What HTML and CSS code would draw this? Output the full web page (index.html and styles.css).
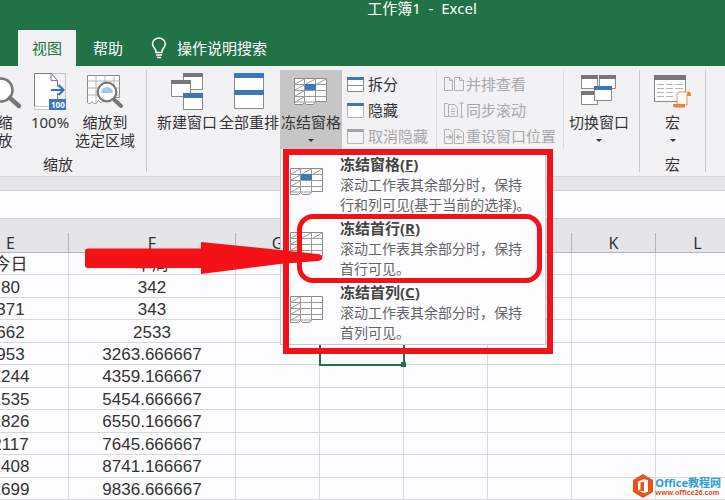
FILE: index.html
```html
<!doctype html>
<html lang="zh-CN">
<head>
    <meta charset="utf-8">
    <meta name="viewport" content="width=device-width, initial-scale=1">
    <title>工作簿1 - Excel</title>
    <link rel="stylesheet" href="styles.css">
</head>
<body>
    <header class="titlebar">工作簿1  -  Excel</header>
    <nav class="tabs">
        <button class="tab active">视图</button>
        <button class="tab">帮助</button>
        <button class="tab tell-me">
            <svg width="16" height="22" viewBox="0 0 16 22" fill="none" stroke="#fff" stroke-width="1.5">
                <path d="M5 15.500V14C5 12 1.500 10.500 1.500 7a6.300 6 0 0 1 12.800 0C14.300 10.500 11 12 11 14v1.500zM5 18h6M6 20.500h4"/>
            </svg>
            操作说明搜索
        </button>
    </nav>

    <!-- Ribbon -->
    <div class="ribbon">
        <section class="group zoom-group">
            <div class="tools">
                <button class="big zoom-btn">
                    <svg class="icon" width="42" height="37" viewBox="0 0 42 37" fill="none">
                        <circle cx="17" cy="17" r="11.500" fill="#fff" stroke="#777" stroke-width="2.500"/>
                        <path d="M26 25l9 8" stroke="#777" stroke-width="4.500" stroke-linecap="round"/>
                    </svg>
                    <span>缩<br>放</span>
                </button>
                <button class="big hundred-btn">
                    <svg class="icon" width="32" height="37" viewBox="0 0 32 37" fill="none">
                        <path d="M.5.5h18l5 6v29H.5z" fill="#fff"/>
                        <path d="M.5 36V.5h31V26M.5 33.500h14M.5 36.500h14" stroke="#c4c4c4"/>
                        <path d="M.5 33V.5h17l6 7V14M17 .5v7h7M23.500 20v6" stroke="#7d7d7d"/>
                        <path d="M17 17h11M24.500 12l5 5-5 5" stroke="#2f74c0" stroke-width="2.200"/>
                        <path d="M15 26h17v11H15z" fill="#3a78b8"/>
                        <text x="17" y="35" class="badge-text">100</text>
                    </svg>
                    <span>100%</span>
                </button>
                <button class="big selection-btn">
                    <svg class="icon" width="36" height="37" viewBox="0 0 36 37" fill="none">
                        <path d="M.5 2.500h32v22h-15c-2 6-4 6-6 3-2 4-5 4-6 1-2 3-4 2-5 1z" fill="#fff" stroke="#8a8a8a"/>
                        <path d="M.5 8h32M.5 15h32M.5 22h32M9 2.500v27M18 2.500V9M27 2.500v22" stroke="#b5b5b5"/>
                        <circle cx="20" cy="19" r="9.300" fill="#fff" stroke="#777" stroke-width="2.200"/>
                        <path d="M14 20c0-8 12-8 12 0z" fill="#a9c8e6"/>
                        <path d="M27.500 27l6.500 6" stroke="#777" stroke-width="4" stroke-linecap="round"/>
                    </svg>
                    <span>缩放到<br>选定区域</span>
                </button>
            </div>
            <div class="group-name">缩放</div>
        </section>

        <section class="group window-group">
            <div class="tools">
                <button class="big">
                    <svg class="icon" width="32" height="37" viewBox="0 0 32 37" fill="#fff" stroke="#8a8a8a">
                        <path d="M12.500.5h19v16h-19z"/><path d="M12 0h20v4H12z" fill="#777" stroke="none"/>
                        <path d="M.5 7.500h19v16H.5z"/><path d="M0 7h20v4H0z" fill="#777" stroke="none"/>
                        <path d="M12.500 20.500h19v16h-19z"/><path d="M12 20h20v5H12z" fill="#3a78b8" stroke="none"/>
                    </svg>
                    <span>新建窗口</span>
                </button>
                <button class="big">
                    <svg class="icon" width="30" height="37" viewBox="0 0 30 37" fill="#fff" stroke="#8a8a8a">
                        <path d="M.5.5h29v35H.5z"/>
                        <path d="M0 0h30v5H0zM0 17h30v5H0z" fill="#3a78b8" stroke="none"/>
                    </svg>
                    <span>全部重排</span>
                </button>
                <div class="freeze">
                    <button class="big open">
                        <svg class="icon" width="34" height="29" viewBox="0 0 34 29">
                            <use href="#grid"/><use href="#pane"/>
                        </svg>
                        <span>冻结窗格</span>
                        <i class="caret"></i>
                    </button>
                    <div class="menu">
                        <button class="item">
                            <svg width="34" height="29" viewBox="0 0 34 29"><use href="#grid"/><use href="#pane"/></svg>
                            <span class="item-text"><b>冻结窗格(<u>F</u>)</b>滚动工作表其余部分时，保持<br>行和列可见(基于当前的选择)。</span>
                        </button>
                        <button class="item">
                            <svg width="34" height="29" viewBox="0 0 34 29"><use href="#grid"/></svg>
                            <span class="item-text"><b>冻结首行(<u>R</u>)</b>滚动工作表其余部分时，保持<br>首行可见。</span>
                        </button>
                        <button class="item">
                            <svg width="34" height="29" viewBox="0 0 34 29"><use href="#grid-column"/></svg>
                            <span class="item-text"><b>冻结首列(<u>C</u>)</b>滚动工作表其余部分时，保持<br>首列可见。</span>
                        </button>
                        <div class="mark-frame"></div>
                        <div class="mark-ring"></div>
                        <svg class="mark-arrow" width="238" height="32" viewBox="0 0 238 32" fill="#f41118">
                            <path d="M3 6.500h113V0l79 8 38 4c6 1 6 6 0 7l-38 3-79 10v-6H3q-3 0-3-3V9.500q0-3 3-3z"/>
                        </svg>
                    </div>
                </div>
                <div class="small-list">
                    <button class="small">
                        <svg width="17" height="15" viewBox="0 0 17 15"><path d="M.5.5h16v14H.5zM1 8.500h15" fill="#fff" stroke="#8a8a8a"/><path d="M0 0h17v3H0z" fill="#3a78b8"/></svg>
                        拆分
                    </button>
                    <button class="small">
                        <svg width="17" height="15" viewBox="0 0 17 15"><path d="M.5.5h16v14H.5z" fill="#fff" stroke="#b5b5b5"/><path d="M0 0h17v3H0z" fill="#3a78b8"/></svg>
                        隐藏
                    </button>
                    <button class="small" disabled>
                        <svg width="17" height="15" viewBox="0 0 17 15"><path d="M.5.5h16v14H.5z" fill="#f4f3f5" stroke="#b5b5b5"/><path d="M0 0h17v3H0z" fill="#a5a5a5"/></svg>
                        取消隐藏
                    </button>
                </div>
                <div class="small-list compare">
                    <button class="small" disabled>
                        <svg width="20" height="14" viewBox="0 0 20 14" fill="none" stroke="#b0b0b0"><path d="M.5.5h5l3 3v10h-8zM5.500.5v3h3M10.500.5h5l4 3v10h-9zM15.500.5v3h4"/></svg>
                        并排查看
                    </button>
                    <button class="small" disabled>
                        <svg width="20" height="18" viewBox="0 0 20 18" fill="none" stroke="#b0b0b0"><path d="M4 2.500H.5v13H4M4.500 3.500h6l3 3v9h-9zM7 8h4M7 10.500h4M7 13h4M17.500 1v16M15.500 3l2-2 2 2M15.500 15l2 2 2-2"/></svg>
                        同步滚动
                    </button>
                    <button class="small" disabled>
                        <svg width="20" height="15" viewBox="0 0 20 15" fill="none" stroke="#b0b0b0"><path d="M.5.500h5l3 3v11h-8zM10.500.5h5l4 3v11h-9z"/><path d="M2 8h5M5 5.500L7.500 8 5 10.500M18 8h-5M15 5.500L12.500 8l2.500 2.500" stroke="#8f8f8f"/></svg>
                        重设窗口位置
                    </button>
                </div>
                <button class="big switch-btn">
                    <svg class="icon" width="36" height="37" viewBox="0 0 36 37" fill="#fff" stroke="#8a8a8a">
                        <path d="M.5 2.500h16v13H.5zM18.500 2.500h16v13h-16zM.5 18.500h16v13H.5z"/>
                        <path d="M0 2h17v4H0zM18 2h17v4H18zM0 18h17v4H0z" fill="#777" stroke="none"/>
                        <path d="M13.500 13.500h17v14h-17z"/><path d="M13 13h18v4H13z" fill="#3a78b8" stroke="none"/>
                    </svg>
                    <span>切换窗口</span>
                    <i class="caret"></i>
                </button>
            </div>
        </section>

        <section class="group macro-group">
            <div class="tools">
                <button class="big">
                    <svg class="icon" width="38" height="37" viewBox="0 0 38 37" fill="none">
                        <path d="M.5 2.500h31v26H.5z" fill="#fff" stroke="#8a8a8a"/>
                        <path d="M0 2h32v5H0z" fill="#777"/>
                        <path d="M3 11.500h7m2 0h7m2 0h8M3 15.500h7m2 0h7m2 0h8M3 19.500h7m2 0h7M3 23.500h7m2 0h7" stroke="#b5b5b5"/>
                        <path d="M23 32V21q0-2 2-2h10q-2 1-2 4v9z" fill="#fff" stroke="#e8915a"/>
                        <path d="M34 19q3-1 3 4h-4q0-3 1-4zM19 31h12v3.500H21q-2 0-2-3.500z" fill="#f07f2e"/>
                    </svg>
                    <span>宏</span>
                    <i class="caret"></i>
                </button>
            </div>
            <div class="group-name">宏</div>
        </section>
    </div>

    <div class="formula"><input type="text" aria-label="编辑栏"></div>

    <!-- Worksheet -->
    <main class="sheet">
        <table>
            <colgroup><col class="col-e"><col class="col-f"><col><col><col><col><col><col></colgroup>
            <thead>
                <tr><th>E</th><th>F</th><th>G</th><th>H</th><th>I</th><th>J</th><th>K</th><th>L</th></tr>
            </thead>
            <tbody>
                <tr><td>今日</td><td>本周</td><td></td><td></td><td></td><td></td><td></td><td></td></tr>
                <tr><td>80</td><td>342</td><td></td><td></td><td></td><td></td><td></td><td></td></tr>
                <tr><td>371</td><td>343</td><td></td><td></td><td></td><td></td><td></td><td></td></tr>
                <tr><td>662</td><td>2533</td><td></td><td></td><td></td><td></td><td></td><td></td></tr>
                <tr><td>953</td><td>3263.666667</td><td></td><td class="selected"></td><td></td><td></td><td></td><td></td></tr>
                <tr><td>1244</td><td>4359.166667</td><td></td><td></td><td></td><td></td><td></td><td></td></tr>
                <tr><td>1535</td><td>5454.666667</td><td></td><td></td><td></td><td></td><td></td><td></td></tr>
                <tr><td>1826</td><td>6550.166667</td><td></td><td></td><td></td><td></td><td></td><td></td></tr>
                <tr><td>2117</td><td>7645.666667</td><td></td><td></td><td></td><td></td><td></td><td></td></tr>
                <tr><td>2408</td><td>8741.166667</td><td></td><td></td><td></td><td></td><td></td><td></td></tr>
                <tr><td>2699</td><td>9836.666667</td><td></td><td></td><td></td><td></td><td></td><td></td></tr>
            </tbody>
        </table>
    </main>

    <div class="watermark">
        <svg width="20" height="24" viewBox="0 0 20 24">
            <path d="M10 0l10 6v12l-10 6-10-6V6z" fill="#e8541c"/>
            <path d="M5 7.500l6-2.500 4 1.200v11.600L11 19l-6-2.500 6 .7V7.500L7.500 8.300v7L5 16.500z" fill="#fff"/>
        </svg>
        <div>
            <div class="site">Office教程网</div>
            <div class="url">www.office26.com</div>
        </div>
    </div>

    <!-- Shared shapes for the freeze icons -->
    <svg class="defs" width="0" height="0">
        <symbol id="grid" viewBox="0 0 34 29">
            <path d="M.5 1.500h32v23h-11l-2 3h-7l-2-2-2 2h-8z" fill="#fff" stroke="#8a8a8a"/>
            <path d="M.5 7.500h32M.5 13.500h32M.5 19.500h32M.5 25h20M10.500 1.500v24M21.500 1.500v24" fill="none" stroke="#9a9a9a"/>
            <path d="M1 7l9-5M12 7l9-5M23 7l9-5M1 13l9-5M1 19l9-5M1 25l9-5" fill="none" stroke="#9a9a9a"/>
        </symbol>
        <symbol id="grid-column" viewBox="0 0 34 29">
            <path d="M.5 1.500h32v23h-11l-2 3h-7l-2-2-2 2h-8z" fill="#fff" stroke="#8a8a8a"/>
            <path d="M.5 7.500h32M.5 13.500h32M.5 19.500h32M.5 25h20M10.500 1.500v24M21.500 1.500v24" fill="none" stroke="#9a9a9a"/>
            <path d="M1 7l9-5M1 13l9-5M1 19l9-5M1 25l9-5" fill="none" stroke="#9a9a9a"/>
        </symbol>
        <symbol id="pane" viewBox="0 0 34 29"><path d="M11 7h11v6H11z" fill="#3a78b8"/></symbol>
    </svg>
</body>
</html>
```
FILE: styles.css
```css
* {
    box-sizing: border-box;
}

html, body {
    height: 100%;
}

body {
    position: relative;
    display: flex;
    flex-direction: column;
    margin: 0;
    overflow: hidden;
    background: #fdfcfe;
    color: #333;
    font-family: "Noto Sans", "Noto Sans CJK SC", sans-serif;
    font-size: 15px;
    line-height: 18px;
}

button {
    padding: 0;
    border: none;
    background: none;
    color: inherit;
    font: inherit;
    white-space: nowrap;
}

svg {
    flex: none;
    display: block;
}

.titlebar {
    padding: 0 0 14px 119px;
    background: #217346;
    color: #fff;
    line-height: 16px;
    text-align: center;
    white-space: pre;
}

.tabs {
    display: flex;
    height: 36px;
    padding-left: 18px;
    background: #217346;
}

.tab {
    padding: 0 17px;
    color: #fff;
}

.tab.active {
    padding: 0 14px;
    background: #f2f1f3;
    color: #217346;
}

.tell-me {
    display: flex;
    align-items: center;
    gap: 10px;
    padding: 0 11px;
}

/* Ribbon */
.ribbon {
    display: flex;
    padding: 4px 0;
    background: #f2f1f3;
}

.group {
    flex: none;
    height: 102px;
    border-right: 1px solid #c9c8ca;
}

.zoom-group {
    width: 177px;
    margin-left: -30px;
}

.zoom-group .tools {
    padding-left: 14px;
}

.window-group {
    width: 493px;
    padding-left: 9px;
}

.macro-group {
    width: 66px;
}

.macro-group .tools {
    justify-content: center;
}

.tools {
    display: flex;
}

.group-name {
    margin-top: 6px;
    text-align: center;
}

.big {
    display: flex;
    flex-direction: column;
    align-items: center;
    width: 62px;
    height: 79px;
    padding-top: 3px;
}

.big .icon {
    height: 37px;
    margin-bottom: 3px;
}

.zoom-btn {
    width: 42px;
}

.hundred-btn {
    width: 48px;
}

.badge-text {
    fill: #fff;
    font: bold 8px "Noto Sans", sans-serif;
}

.open {
    background: #c6c6c6;
}

.caret {
    margin-top: 8px;
    border: 3px solid transparent;
    border-top-color: #333;
    border-bottom: none;
}

.small-list {
    display: flex;
    flex-direction: column;
    width: 94px;
    margin-top: 1px;
    padding-left: 5px;
}

.small {
    display: flex;
    align-items: center;
    gap: 4px;
    height: 26px;
}

.small:disabled {
    color: #a9a8aa;
}

.compare {
    width: 128px;
    padding-left: 7px;
    border: solid #dcdbdd;
    border-width: 0 1px;
}

.compare .small {
    gap: 2px;
}

.switch-btn {
    margin-left: 4px;
}

/* Freeze panes menu */
.freeze {
    position: relative;
}

.menu {
    position: absolute;
    top: 79px;
    left: 0;
    z-index: 2;
    width: 266px;
    height: 196px;
    padding: 4px 0 0 9px;
    border: 1px solid #c9c8ca;
    border-top: none;
    background: #fdfcfe;
    color: #666;
}

.item {
    display: flex;
    gap: 16px;
    width: 100%;
    height: 64px;
    text-align: left;
}

.item svg {
    margin-top: 14px;
}

.item-text {
    font-size: 14px;
    line-height: 20px;
}

.item b {
    display: block;
    color: #444;
    font-size: 15px;
    line-height: 22px;
}

.mark-frame {
    position: absolute;
    top: 0;
    left: 2px;
    width: 270px;
    height: 205px;
    border: 6px solid #f41118;
}

.mark-ring {
    position: absolute;
    top: 65px;
    left: 16px;
    width: 245px;
    height: 69px;
    border: 5px solid #f41118;
    border-radius: 16px;
}

.mark-arrow {
    position: absolute;
    top: 93px;
    left: -196px;
}

/* Formula bar */
.formula {
    padding: 13px 0 14px;
    border-top: 1px solid #d2d1d3;
    background: #e5e4e6;
}

.formula input {
    display: block;
    width: 100%;
    height: 29px;
    border: solid #cfced0;
    border-width: 1px 0;
    background: #fdfcfe;
}

/* Worksheet */
.sheet {
    flex: 1;
    min-height: 0;
}

table {
    width: 755px;
    height: 100%;
    margin-left: -47px;
    table-layout: fixed;
    border-collapse: separate;
    border-spacing: 0;
}

col {
    width: 84px;
}

.col-e {
    width: 116px;
}

.col-f {
    width: 167px;
}

th, td {
    padding: 0;
    text-align: center;
    border-right: 1px solid #d8d7da;
    border-bottom: 1px solid #d8d7da;
}

th {
    height: 20px;
    border-color: #b5b4b6;
    background: #e5e4e6;
    font-size: 16px;
    font-weight: normal;
}

td {
    padding-top: 3px;
    font-family: "Liberation Sans", "Noto Sans CJK SC", sans-serif;
    font-size: 17px;
}

.selected {
    position: relative;
    outline: 2px solid #217346;
    outline-offset: -1px;
}

.selected::after {
    content: "";
    position: absolute;
    right: -3px;
    bottom: -3px;
    width: 5px;
    height: 5px;
    background: #217346;
}

.watermark {
    position: absolute;
    right: 4px;
    bottom: 2px;
    display: flex;
    gap: 2px;
    align-items: center;
}

.site {
    color: #2a9fd8;
    font-size: 11px;
    font-weight: bold;
    line-height: 13px;
}

.url {
    color: #e8541c;
    font-size: 7px;
    font-weight: bold;
    line-height: 8px;
}

.defs {
    position: absolute;
}
```
